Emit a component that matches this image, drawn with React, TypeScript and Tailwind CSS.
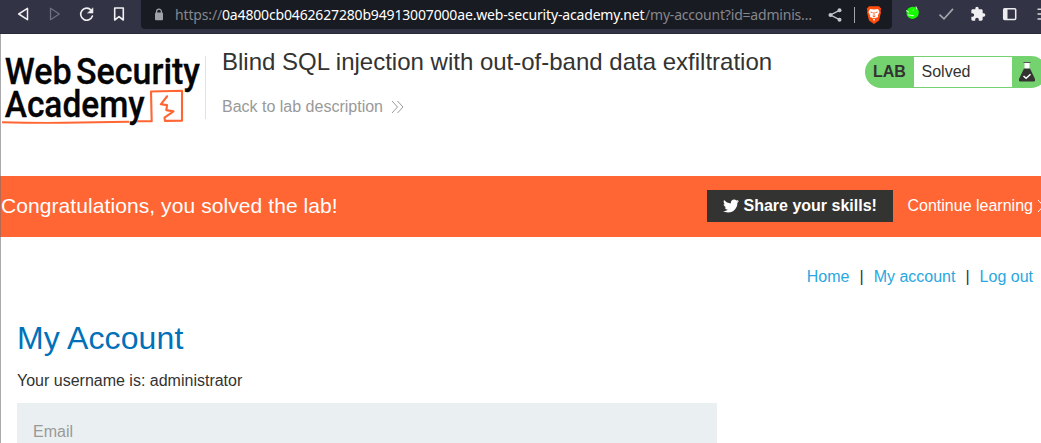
import React from "react";
import { FaTwitter } from "react-icons/fa";
import { MdExtension } from "react-icons/md";

function Toolbar() {
  return (
    <header className="flex h-[34px] w-full shrink-0 border-b border-[#292b3b] bg-[#323445] pl-[13px]">
      <div className="flex h-7 w-[128px] shrink-0 items-center">
        <svg width="128" height="28" viewBox="0 0 128 28" fill="none" strokeLinejoin="round" strokeLinecap="round">
          <path d="M14.5 8.3v11.4L5.7 14z" stroke="#f0f0f2" strokeWidth="1.5" />
          <path d="M37.5 8.3v11.4l8.8-5.7z" stroke="#6f717e" strokeWidth="1.3" />
          <path d="M78.2 10.2A6 6 0 1 0 79.4 16" stroke="#f0f0f2" strokeWidth="1.6" />
          <path d="M80 8.1v5h-5.2z" fill="#f0f0f2" stroke="#f0f0f2" strokeWidth=".5" />
          <path d="M101.7 8h8.6v12l-4.3-3.4-4.3 3.4z" stroke="#f0f0f2" strokeWidth="1.6" />
        </svg>
      </div>
      <div className="flex h-[29px] w-[751px] shrink-0 items-center rounded-b-[4px] bg-[#191b22]">
        <svg className="ml-[14px] shrink-0" width="20" height="28" viewBox="0 0 20 28">
          <path d="M1.6 12V10.6a2.4 2.4 0 0 1 4.8 0V12" stroke="#a0a1a9" strokeWidth="1.3" fill="none" />
          <rect x="0" y="11.4" width="8" height="7.8" rx="1" fill="#a0a1a9" />
        </svg>
        <div className="flex w-[642px] shrink-0 font-['Noto_Sans',sans-serif] text-[14px] leading-[28px] whitespace-nowrap text-[#85878d]">
          <span className="w-[47px] tracking-[-0.15px]">https://</span>
          <span className="w-[423px] tracking-[-0.16px] text-white">0a4800cb0462627280b94913007000ae.web-security-academy.net</span>
          <span className="tracking-[-0.2px]">/my-account?id=adminis…</span>
        </div>
        <svg width="70" height="28" viewBox="0 0 70 28" fill="none">
          <path d="M23 9.2 13.5 14 23 18.8" stroke="#c4c5c9" strokeWidth="1.4" />
          <circle cx="22.5" cy="9.2" r="2" fill="#c4c5c9" />
          <circle cx="13.5" cy="14" r="2" fill="#c4c5c9" />
          <circle cx="22.5" cy="18.8" r="2" fill="#c4c5c9" />
          <path d="M37.5 6v16" stroke="#a3a4a8" />
          <path d="M52 5.2h10l2.3 2.5-.8 2 .5 1.5-2 8.2-5 3.6-5-3.6-2-8.2.5-1.5-.8-2z" fill="#ff4c0c" />
          <path d="m53 8 4 .6L61 8l1.5 3-1.7 3.4.3 1.5-2.7 1.2L57 20.5 55.6 17l-2.7-1.1.3-1.5-1.7-3.4z" fill="#fff" />
          <path d="m53.5 11 2.2.8M60.5 11l-2.2.8M57 11v4.3M55.6 15l1.4.9 1.4-.9M55.6 18.3 57 17l1.4 1.3" stroke="#ff4c0c" strokeWidth=".9" />
        </svg>
      </div>
      <div className="flex h-7 w-[149px] shrink-0 items-center overflow-hidden">
        <svg className="shrink-0" width="72" height="28" viewBox="0 0 72 28" fill="none">
          <path d="M16 8.5q5-3.5 9.5 0 2.5 4 0 8-4.5 4.5-9.5.5-3-4 0-8.5z" fill="#16f900" />
          <path d="m14 10.5 3 1.8m7-5.8.8 2.8M15.8 14.8l6 1m-1-5.5 1-.4" stroke="#dcffd9" strokeWidth="1" />
          <path d="m47.5 14.6 4.5 4.3 9-10" stroke="#a4a5ac" strokeWidth="1.6" />
        </svg>
        <MdExtension className="ml-[6px] size-4 shrink-0 text-[#f0f0f2]" />
        <svg className="shrink-0" width="55" height="28" viewBox="0 0 55 28" fill="none">
          <rect x="17.7" y="8.7" width="12" height="10.8" rx="1" stroke="#ececef" strokeWidth="1.5" />
          <path d="M17.7 8.7h3.8v10.8h-3.8z" fill="#ececef" />
          <path d="M51.5 9.2H66M51.5 14H66M51.5 18.9H66" stroke="#d6d7db" strokeWidth="1.5" />
        </svg>
      </div>
    </header>
  );
}

function AcademyLogo() {
  return (
    <svg width="204" height="80" viewBox="1 50 204 80" fill="none" className="shrink-0">
      <g fill="#050505" stroke="#050505" strokeWidth=".3" fontFamily="Roboto, sans-serif" fontWeight="500" fontSize="37">
        <text x="4.7" y="84.3" textLength="67" lengthAdjust="spacingAndGlyphs">Web</text>
        <text x="76" y="84.3" textLength="124" lengthAdjust="spacingAndGlyphs">Security</text>
        <text x="4.7" y="117" textLength="140" lengthAdjust="spacingAndGlyphs">Academy</text>
      </g>
      <path d="M2 122.3q32 .8 62 .5t65-1" stroke="#ff6633" strokeWidth="1.9" />
      <path d="M137 121.2h14.7L151 91.5l31-.8v30l-17 .2-.5-3.3 9-6.2-7.2-1.3.8-5-6.3-.8 6.2-7.8-.5-1" stroke="#ff6633" strokeWidth="2.1" strokeLinejoin="round" />
    </svg>
  );
}

function LabHeader() {
  return (
    <section className="flex h-[142px] shrink-0 pt-4">
      <AcademyLogo />
      <div className="mt-[6px] h-[63px] w-px shrink-0 bg-[#e1e1e1]" />
      <div className="ml-4 w-[643px] shrink-0 text-[#333332]">
        <h1 className="-mt-px h-[25px] text-[24px] leading-[25px] whitespace-nowrap">Blind SQL injection with out-of-band data exfiltration</h1>
        <a className="mt-[23px] flex h-5 items-center text-[16px] text-[#999]">
          Back to lab description
          <svg className="ml-[8px]" width="14" height="14" fill="none" stroke="#999" strokeWidth="1">
            <path d="m1 1 5.5 6L1 13M6.5 1 12 7l-5.5 6" />
          </svg>
        </a>
      </div>
      <div className="mt-[6px] flex h-8 w-[182px] shrink-0 items-center rounded-full bg-[#74d26f] text-[#333332]">
        <span className="w-[49px] pl-[8px] text-[16px] font-bold">LAB</span>
        <span className="h-[30px] w-[98px] bg-white pl-[7.5px] text-[16px] leading-[29px]">Solved</span>
        <svg className="ml-[6px]" width="18" height="22" viewBox="0 0 18 22">
          <path d="M6.5 2h5v6h-5z" fill="#fff" />
          <path d="M5.5 1.5h7" stroke="#555" />
          <path d="M6 7.5h6l5 10.5q.5 2.5-1 2.5H2q-1.5 0-1-2.5z" fill="#333332" />
          <path d="m5.5 15 2.6 2.3 4.4-4" fill="none" stroke="#fff" strokeWidth="1.5" />
        </svg>
      </div>
    </section>
  );
}

export default function App() {
  return (
    <div className="flex h-[443px] w-[1041px] flex-col overflow-hidden bg-white font-['Liberation_Sans',Arial,sans-serif]">
      <Toolbar />
      <main className="flex h-[409px] shrink-0 flex-col border-l border-[#aaaaad]">
        <LabHeader />
        <section className="-ml-px flex h-[61px] shrink-0 items-center border-l border-[#b36a51] bg-[#ff6633] text-white">
          <h2 className="mb-[2px] w-[706px] shrink-0 text-[21px] tracking-[0.08px] whitespace-nowrap">Congratulations, you solved the lab!</h2>
          <button className="mb-px flex h-8 w-[186px] shrink-0 items-center bg-[#333332] pl-4 text-[16px] font-bold whitespace-nowrap">
            <FaTwitter className="mr-[4.5px] size-4 shrink-0" />
            Share your skills!
          </button>
          <a className="mb-px ml-[14.5px] flex shrink-0 items-center text-[16px] whitespace-nowrap">
            Continue learning
            <svg className="ml-[4px]" width="14" height="14" fill="none" stroke="#fff" strokeWidth="1">
              <path d="m1 1 5.5 6L1 13M6.5 1 12 7l-5.5 6" />
            </svg>
          </a>
        </section>
        <nav className="mt-[30px] flex h-5 shrink-0 items-center justify-end gap-[10px] pr-2 text-[16px] text-[#29a7df]">
          <a>Home</a>
          <span className="text-[#333332]">|</span>
          <a>My account</a>
          <span className="text-[#333332]">|</span>
          <a>Log out</a>
        </nav>
        <section className="ml-4 mt-[31px] w-[700px] text-[#333332]">
          <h1 className="h-10 text-[32px] leading-10 tracking-[0.1px] text-[#0071b9]">My Account</h1>
          <p className="mt-[13px] h-5 text-[16px] leading-5">Your username is: administrator</p>
          <div className="mt-[12px] h-14 bg-[#eaf0f2] px-4 pt-[19px] text-[16px] leading-5 text-[#999]">Email</div>
        </section>
      </main>
    </div>
  );
}
